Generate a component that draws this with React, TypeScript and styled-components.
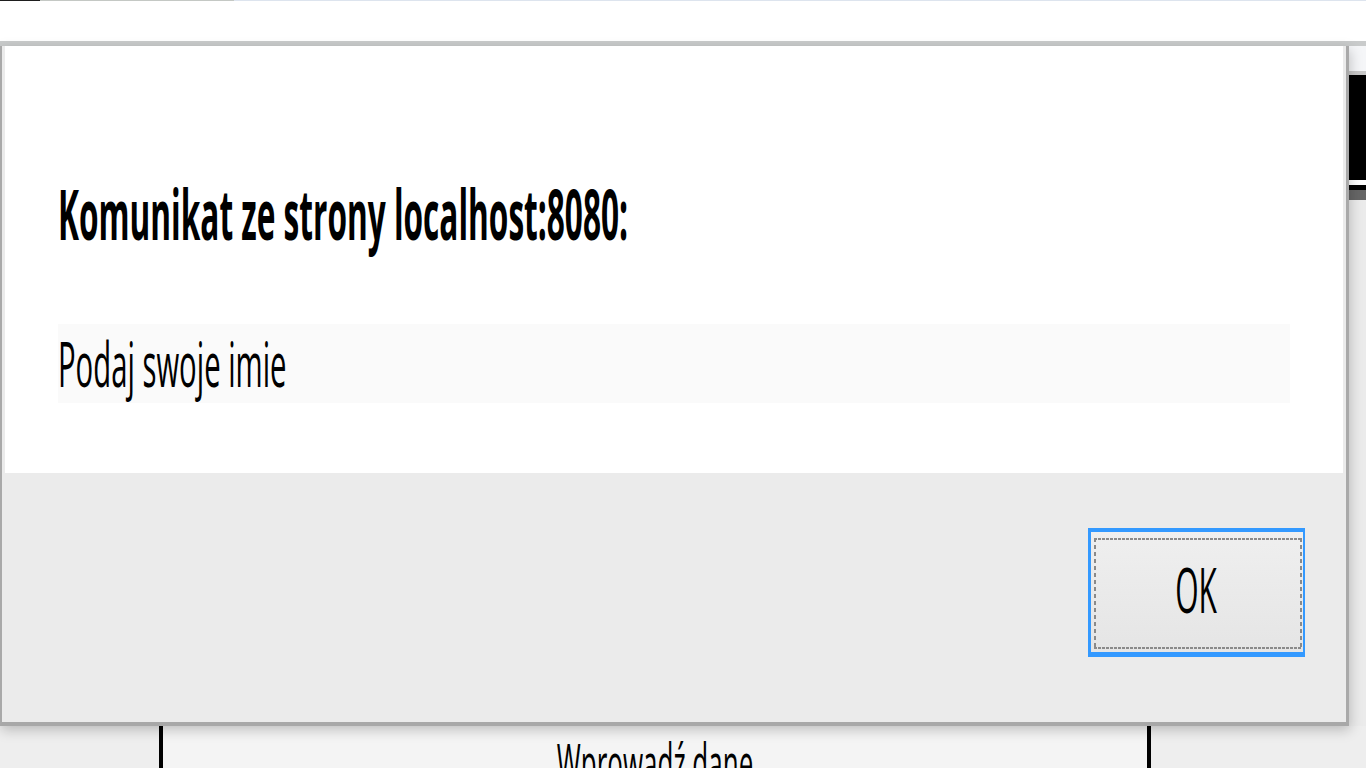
import React from 'react';
import styled, { createGlobalStyle } from 'styled-components';

const Global = createGlobalStyle`
  html, body, #root { margin: 0; padding: 0; }
  body {
    width: 1366px;
    height: 768px;
    overflow: hidden;
    background: #ffffff;
    font-family: "Open Sans", "Noto Sans", "DejaVu Sans", sans-serif;
    color: #000;
  }
`;

const Page = styled.div`
  width: 1366px;
  height: 768px;
  display: flex;
  flex-direction: column;
  overflow: hidden;
  background: #ffffff;
`;

const TopStrip = styled.div`
  display: flex;
  height: 1px;
  flex-shrink: 0;
`;

const StripSeg = styled.div<{ $w?: number; $c: string }>`
  background: ${(p) => p.$c};
  ${(p) => (p.$w ? `width: ${p.$w}px;` : 'flex: 1;')}
`;

const TopGap = styled.div`
  height: 40px;
  flex-shrink: 0;
  background: #ffffff;
`;

const GrayBand = styled.div`
  height: 5px;
  flex-shrink: 0;
  background: #c9cbcb;
`;

const MainRow = styled.div`
  display: flex;
  height: 680px;
  flex-shrink: 0;
`;

const Dialog = styled.div`
  position: relative;
  z-index: 1;
  width: 1349px;
  box-sizing: border-box;
  display: flex;
  flex-direction: column;
  background: #ebebeb;
  border-left: 2px solid #a9a9a9;
  border-right: 3px solid #a9a9a9;
  border-bottom: 4px solid #a8a8a8;
  box-shadow: 1px 4px 12px rgba(0, 0, 0, 0.22);
`;

const Content = styled.div`
  height: 427px;
  margin: 0 3px;
  background: #ffffff;
  box-sizing: border-box;
  padding: 126px 53px 0 53px;
  display: flex;
  flex-direction: column;
`;

const PromptBox = styled.div`
  margin-top: 82px;
  height: 79px;
  box-sizing: border-box;
  padding-top: 4px;
  background: #fafafa;
`;

const Line = styled.div<{ $size: number; $scale: number; $weight?: number }>`
  height: ${(p) => Math.round(p.$size * p.$scale)}px;
  font-size: ${(p) => p.$size}px;
  font-weight: ${(p) => p.$weight ?? 400};
  white-space: nowrap;
  color: #000;
`;

const Glyphs = styled.span<{ $scale: number }>`
  display: inline-block;
  line-height: 1;
  transform: scaleY(${(p) => p.$scale});
  transform-origin: 0 0;
`;

const Footer = styled.div`
  flex: 1;
  display: flex;
  justify-content: flex-end;
  align-items: flex-start;
  padding: 55px 41px 0 0;
`;

const OkButton = styled.div`
  position: relative;
  width: 217px;
  height: 129px;
  box-sizing: border-box;
  border-style: solid;
  border-color: #3399ff;
  border-width: 4px 2px 5px 3px;
  background: linear-gradient(#efefef, #e5e5e5);
  display: flex;
  align-items: center;
  justify-content: center;
  padding: 0 2px 17px 0;
`;

const FocusRing = styled.div`
  position: absolute;
  top: 6px;
  left: 3px;
  right: 1px;
  bottom: 3px;
  pointer-events: none;
  background:
    repeating-linear-gradient(90deg, #8a8a8a 0 3px, transparent 3px 4px) top / 100% 2px no-repeat,
    repeating-linear-gradient(90deg, #8a8a8a 0 3px, transparent 3px 4px) bottom / 100% 2px no-repeat,
    repeating-linear-gradient(180deg, #8a8a8a 0 4px, transparent 4px 7px) left / 2px 100% no-repeat,
    repeating-linear-gradient(180deg, #8a8a8a 0 4px, transparent 4px 7px) right / 2px 100% no-repeat;
`;

const SideColumn = styled.div`
  flex: 1;
  display: flex;
  flex-direction: column;
`;

const SideBand = styled.div<{ $h?: number; $c: string }>`
  background: ${(p) => p.$c};
  ${(p) => (p.$h ? `height: ${p.$h}px; flex-shrink: 0;` : 'flex: 1;')}
`;

const BelowRow = styled.div`
  flex: 1;
  display: flex;
`;

const Margin = styled.div<{ $w?: number }>`
  background: #eeeeee;
  ${(p) => (p.$w ? `width: ${p.$w}px;` : 'flex: 1;')}
`;

const Rule = styled.div`
  width: 4px;
  background: #000;
`;

const Cell = styled.div`
  width: 984px;
  background: #f4f4f4;
  display: flex;
  justify-content: center;
  padding-top: 4px;
  box-sizing: border-box;
`;

export default function App() {
  return (
    <>
      <Global />
      <Page>
        <TopStrip>
          <StripSeg $w={40} $c="#1e1e1e" />
          <StripSeg $w={194} $c="#c4c8c4" />
          <StripSeg $c="#dde4ee" />
        </TopStrip>
        <TopGap />
        <GrayBand />
        <MainRow>
          <Dialog>
            <Content>
              <Line $size={31.6} $scale={2.22} $weight={700}>
                <Glyphs $scale={2.22}>Komunikat ze strony localhost:8080:</Glyphs>
              </Line>
              <PromptBox>
                <Line $size={29.3} $scale={2.1}>
                  <Glyphs $scale={2.1}>Podaj swoje imie</Glyphs>
                </Line>
              </PromptBox>
            </Content>
            <Footer>
              <OkButton>
                <FocusRing />
                <Line $size={30} $scale={2.1}>
                  <Glyphs $scale={2.1}>OK</Glyphs>
                </Line>
              </OkButton>
            </Footer>
          </Dialog>
          <SideColumn>
            <SideBand $h={25} $c="#f5f6f8" />
            <SideBand $h={4} $c="#c8c8c8" />
            <SideBand $h={105} $c="#000000" />
            <SideBand $h={5} $c="#ffffff" />
            <SideBand $h={5} $c="#000000" />
            <SideBand $h={10} $c="#666666" />
            <SideBand $c="#ebebeb" />
          </SideColumn>
        </MainRow>
        <BelowRow>
          <Margin $w={159} />
          <Rule />
          <Cell>
            <Line $size={26} $scale={2.1}>
              <Glyphs $scale={2.1}>Wprowadź dane</Glyphs>
            </Line>
          </Cell>
          <Rule />
          <Margin />
        </BelowRow>
      </Page>
    </>
  );
}
